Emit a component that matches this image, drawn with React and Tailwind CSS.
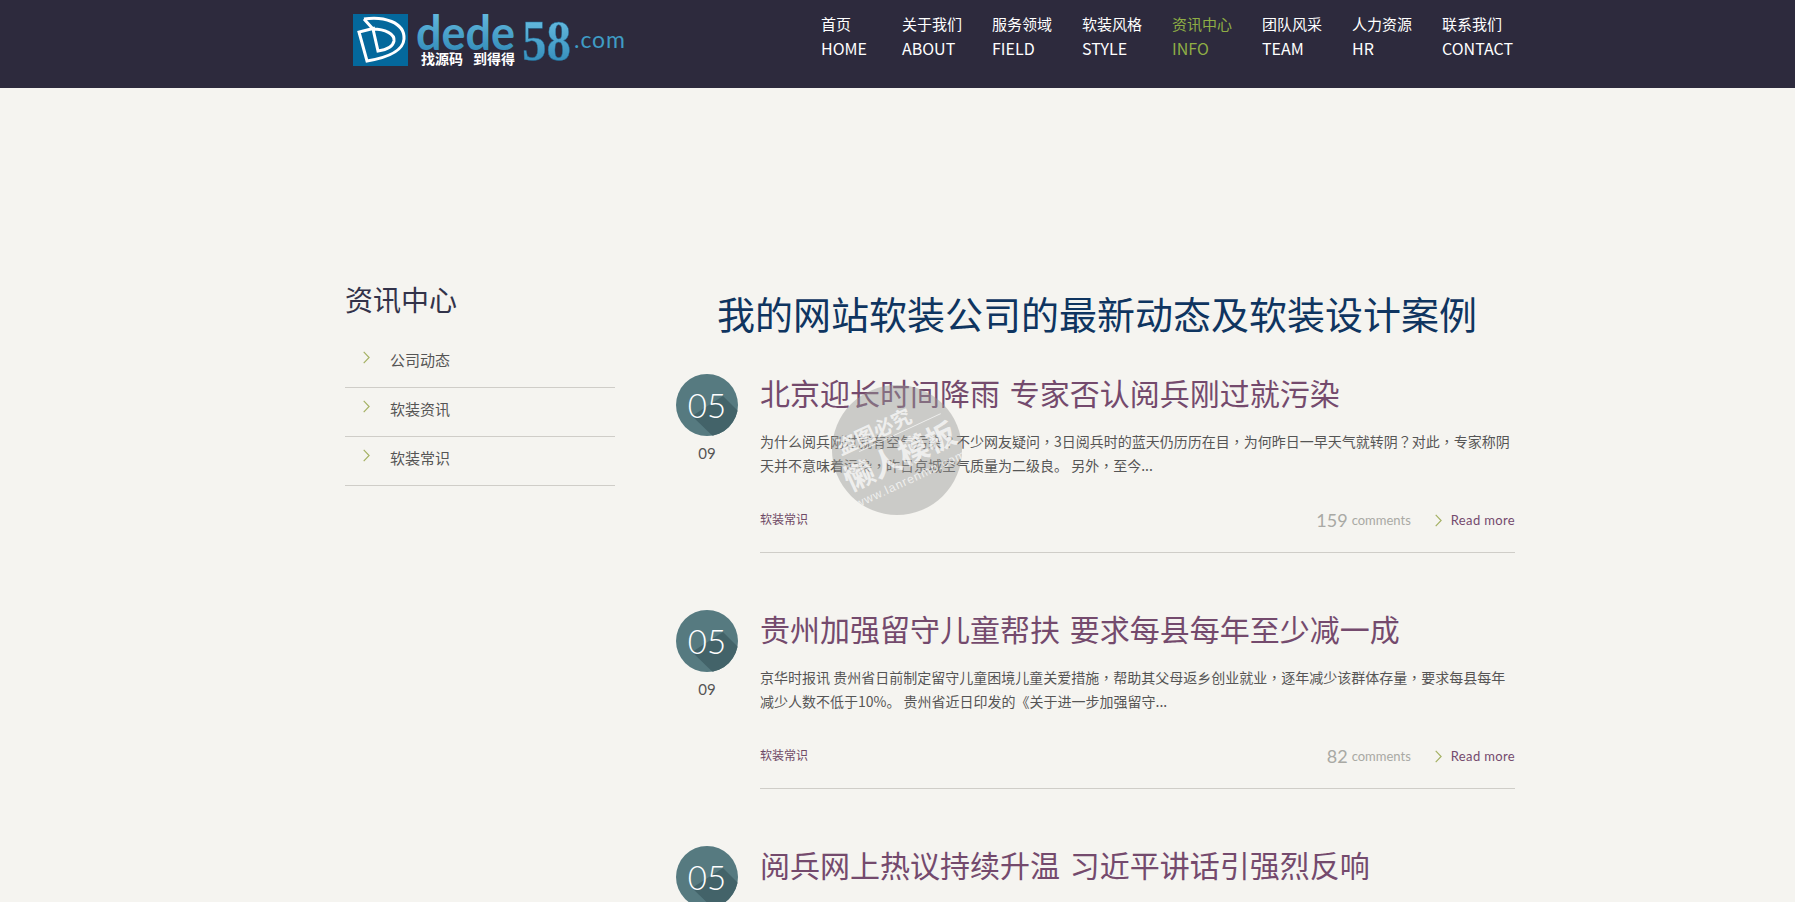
const CJK = '"Noto Sans CJK SC", sans-serif';
const TC = '"Noto Sans CJK TC", sans-serif';

const navItems = [
  ['首页', 'HOME', 'w-[81px]'],
  ['关于我们', 'ABOUT', 'w-[90px]'],
  ['服务领域', 'FIELD', 'w-[90px]'],
  ['软装风格', 'STYLE', 'w-[90px]'],
  ['资讯中心', 'INFO', 'w-[90px]', true],
  ['团队风采', 'TEAM', 'w-[90px]'],
  ['人力资源', 'HR', 'w-[90px]'],
  ['联系我们', 'CONTACT', 'w-[74px]'],
];

const posts = [
  {
    title: '北京迎长时间降雨 专家否认阅兵刚过就污染',
    lines: ['为什么阅兵刚过就有空气污染？不少网友疑问，3日阅兵时的蓝天仍历历在目，为何昨日一早天气就转阴？对此，专家称阴', '天并不意味着污染，昨日京城空气质量为二级良。 另外，至今...'],
    count: '159',
  },
  {
    title: '贵州加强留守儿童帮扶 要求每县每年至少减一成',
    lines: ['京华时报讯 贵州省日前制定留守儿童困境儿童关爱措施，帮助其父母返乡创业就业，逐年减少该群体存量，要求每县每年', '减少人数不低于10%。 贵州省近日印发的《关于进一步加强留守...'],
    count: '82',
  },
  {
    title: '阅兵网上热议持续升温 习近平讲话引强烈反响',
    lines: ['阅兵结束后，网上热议持续升温，网友纷纷点赞。', '习近平讲话引发强烈反响...'],
    count: '64',
  },
];

function Chevron({ className }) {
  return (
    <svg viewBox="0 0 8 14" className={className} fill="none" stroke="#a3b061" strokeWidth="1.3">
      <path d="M0.8 0.6 L7 7 L0.8 13.4" />
    </svg>
  );
}

function Punct({ text }) {
  return text.split(/([，？])/).map((part, i) =>
    part === '，' || part === '？' ? <span key={i} style={{ fontFamily: TC }}>{part}</span> : part
  );
}

function Logo() {
  return (
    <svg viewBox="0 0 275 54" className="w-[275px] h-[54px]">
      <defs>
        <linearGradient id="blue" x1="0" y1="0" x2="0" y2="1">
          <stop offset="0" stopColor="#6fc4e6" />
          <stop offset="1" stopColor="#2b84b3" />
        </linearGradient>
      </defs>
      <rect width="55" height="52" fill="#04689c" />
      <g fill="none" stroke="#fff" strokeWidth="3">
        <path d="M11 5 C30 2 52 8 51 25 C50 38 32 44 14 47 L6 18 L22 14" />
        <path d="M11 5 L20 15 C32 15 42 20 41 27 C40 33 32 36 25 37 L20 15" />
      </g>
      <text x="63" y="36" fontSize="48" fontWeight="700" textLength="99" lengthAdjust="spacingAndGlyphs" fill="url(#blue)" style={{ fontFamily: 'Lato, sans-serif' }}>dede</text>
      <text x="169" y="46" fontSize="56" fontWeight="700" textLength="49" lengthAdjust="spacingAndGlyphs" fill="url(#blue)" stroke="#1f6f9c" strokeWidth="0.5" style={{ fontFamily: '"Liberation Serif", serif' }}>58</text>
      <text x="221" y="34" fontSize="23" textLength="51" fill="#3f9bc4" style={{ fontFamily: 'Lato, sans-serif' }}>.com</text>
      <text x="68" y="50" fontSize="14" fontWeight="700" fill="#fff" style={{ fontFamily: CJK }}>找源码</text>
      <text x="120" y="50" fontSize="14" fontWeight="700" fill="#fff" style={{ fontFamily: CJK }}>到得得</text>
    </svg>
  );
}

function Watermark() {
  return (
    <div className="absolute left-[832px] top-[385px] w-[130px] h-[130px] rounded-full bg-[#9a9a96]/45 text-white/70 pointer-events-none overflow-hidden">
      <div className="absolute inset-0 -rotate-[25deg] flex flex-col items-center justify-center" style={{ fontFamily: CJK }}>
        <span className="-ml-[26px] text-[20px] leading-[24px] font-bold">盗图必究</span>
        <span className="w-[90px] ml-[20px] border-t border-white/70" />
        <span className="text-[30px] leading-[38px] font-bold whitespace-nowrap">懒人模板</span>
        <span className="text-[12px] leading-[16px] tracking-[1px] whitespace-nowrap" style={{ fontFamily: '"Liberation Sans", sans-serif' }}>www.lanrenmb.com</span>
      </div>
    </div>
  );
}

function Post({ post }) {
  return (
    <article className="flex mb-[57px]">
      <div className="w-[84px] shrink-0">
        <div className="relative w-[62px] h-[62px] rounded-full bg-[#567a80] overflow-hidden flex items-center justify-center">
          <svg viewBox="0 0 62 62" className="absolute inset-0 w-full h-full">
            <path d="M16 42 L47 22 L66 41 L66 70 L45 70 Z" fill="#436369" />
          </svg>
          <span className="relative text-[33px] leading-none text-white font-light" style={{ fontFamily: 'Lato, sans-serif' }}>05</span>
        </div>
        <div className="w-[62px] mt-[7px] text-center text-[15px] leading-[20px] text-[#555]" style={{ fontFamily: 'Lato, sans-serif' }}>09</div>
      </div>
      <div className="flex-1 min-w-0 -mt-[2px]">
        <h2 className="text-[30px] leading-[40px] font-normal text-[#744a6d] [word-spacing:3px]">{post.title}</h2>
        <div className="mt-[17px] text-[14px] leading-[24px] text-[#555]">
          {post.lines.map((l) => (
            <p key={l} className="whitespace-nowrap overflow-hidden"><Punct text={l} /></p>
          ))}
        </div>
        <div className="mt-[30px] flex items-center justify-between h-[24px]">
          <span className="text-[12px] text-[#6f4a66]">软装常识</span>
          <div className="flex items-center pt-[2px]" style={{ fontFamily: 'Lato, sans-serif' }}>
            <span className="text-[18px] leading-[20px] text-[#a9a9a4]">{post.count}</span>
            <span className="ml-[4px] text-[13px] leading-[20px] text-[#a9a9a4]">comments</span>
            <Chevron className="ml-[24px] w-[7px] h-[13px]" />
            <span className="ml-[9px] text-[13px] leading-[20px] tracking-[0.35px] text-[#744a6d]">Read more</span>
          </div>
        </div>
        <div className="mt-[21px] border-t border-[#cfcdc8]" />
      </div>
    </article>
  );
}

export default function App() {
  return (
    <div className="relative h-screen overflow-hidden bg-[#f5f4f0]" style={{ fontFamily: CJK }}>
      <header className="h-[88px] bg-[#2d2a3d] pl-[353px] flex">
        <div className="pt-[14px]">
          <Logo />
        </div>
        <nav className="ml-[193px] pt-[12px] flex">
          {navItems.map(([cn, en, w, active]) => (
            <div key={en} className={`${w} shrink-0 leading-[24px] ${active ? 'text-[#8fae45]' : 'text-white'}`}>
              <div className="text-[15px]">{cn}</div>
              <div className="text-[16px]">{en}</div>
            </div>
          ))}
        </nav>
      </header>

      <main className="pl-[345px] w-[1515px] flex pt-[192px]">
        <aside className="w-[270px] shrink-0 -mt-[1px]">
          <h3 className="text-[28px] leading-[40px] font-normal text-[#33334a]">资讯中心</h3>
          <ul className="mt-[20px]">
            {['公司动态', '软装资讯', '软装常识'].map((s) => (
              <li key={s} className="h-[49px] pt-[6px] flex items-start border-b border-[#cfcdc8]">
                <div className="pl-[18px] w-[45px] pt-[6px]"><Chevron className="w-[7px] h-[13px]" /></div>
                <span className="text-[15px] leading-[30px] text-[#555]">{s}</span>
              </li>
            ))}
          </ul>
        </aside>
        <section className="ml-[61px] flex-1 min-w-0">
          <h1 className="text-center text-[38px] leading-[50px] font-normal text-[#0f3560] mt-[8px] mb-[36px] pl-[3px]">我的网站软装公司的最新动态及软装设计案例</h1>
          {posts.map((p) => (
            <Post key={p.title} post={p} />
          ))}
        </section>
      </main>
      <Watermark />
    </div>
  );
}
